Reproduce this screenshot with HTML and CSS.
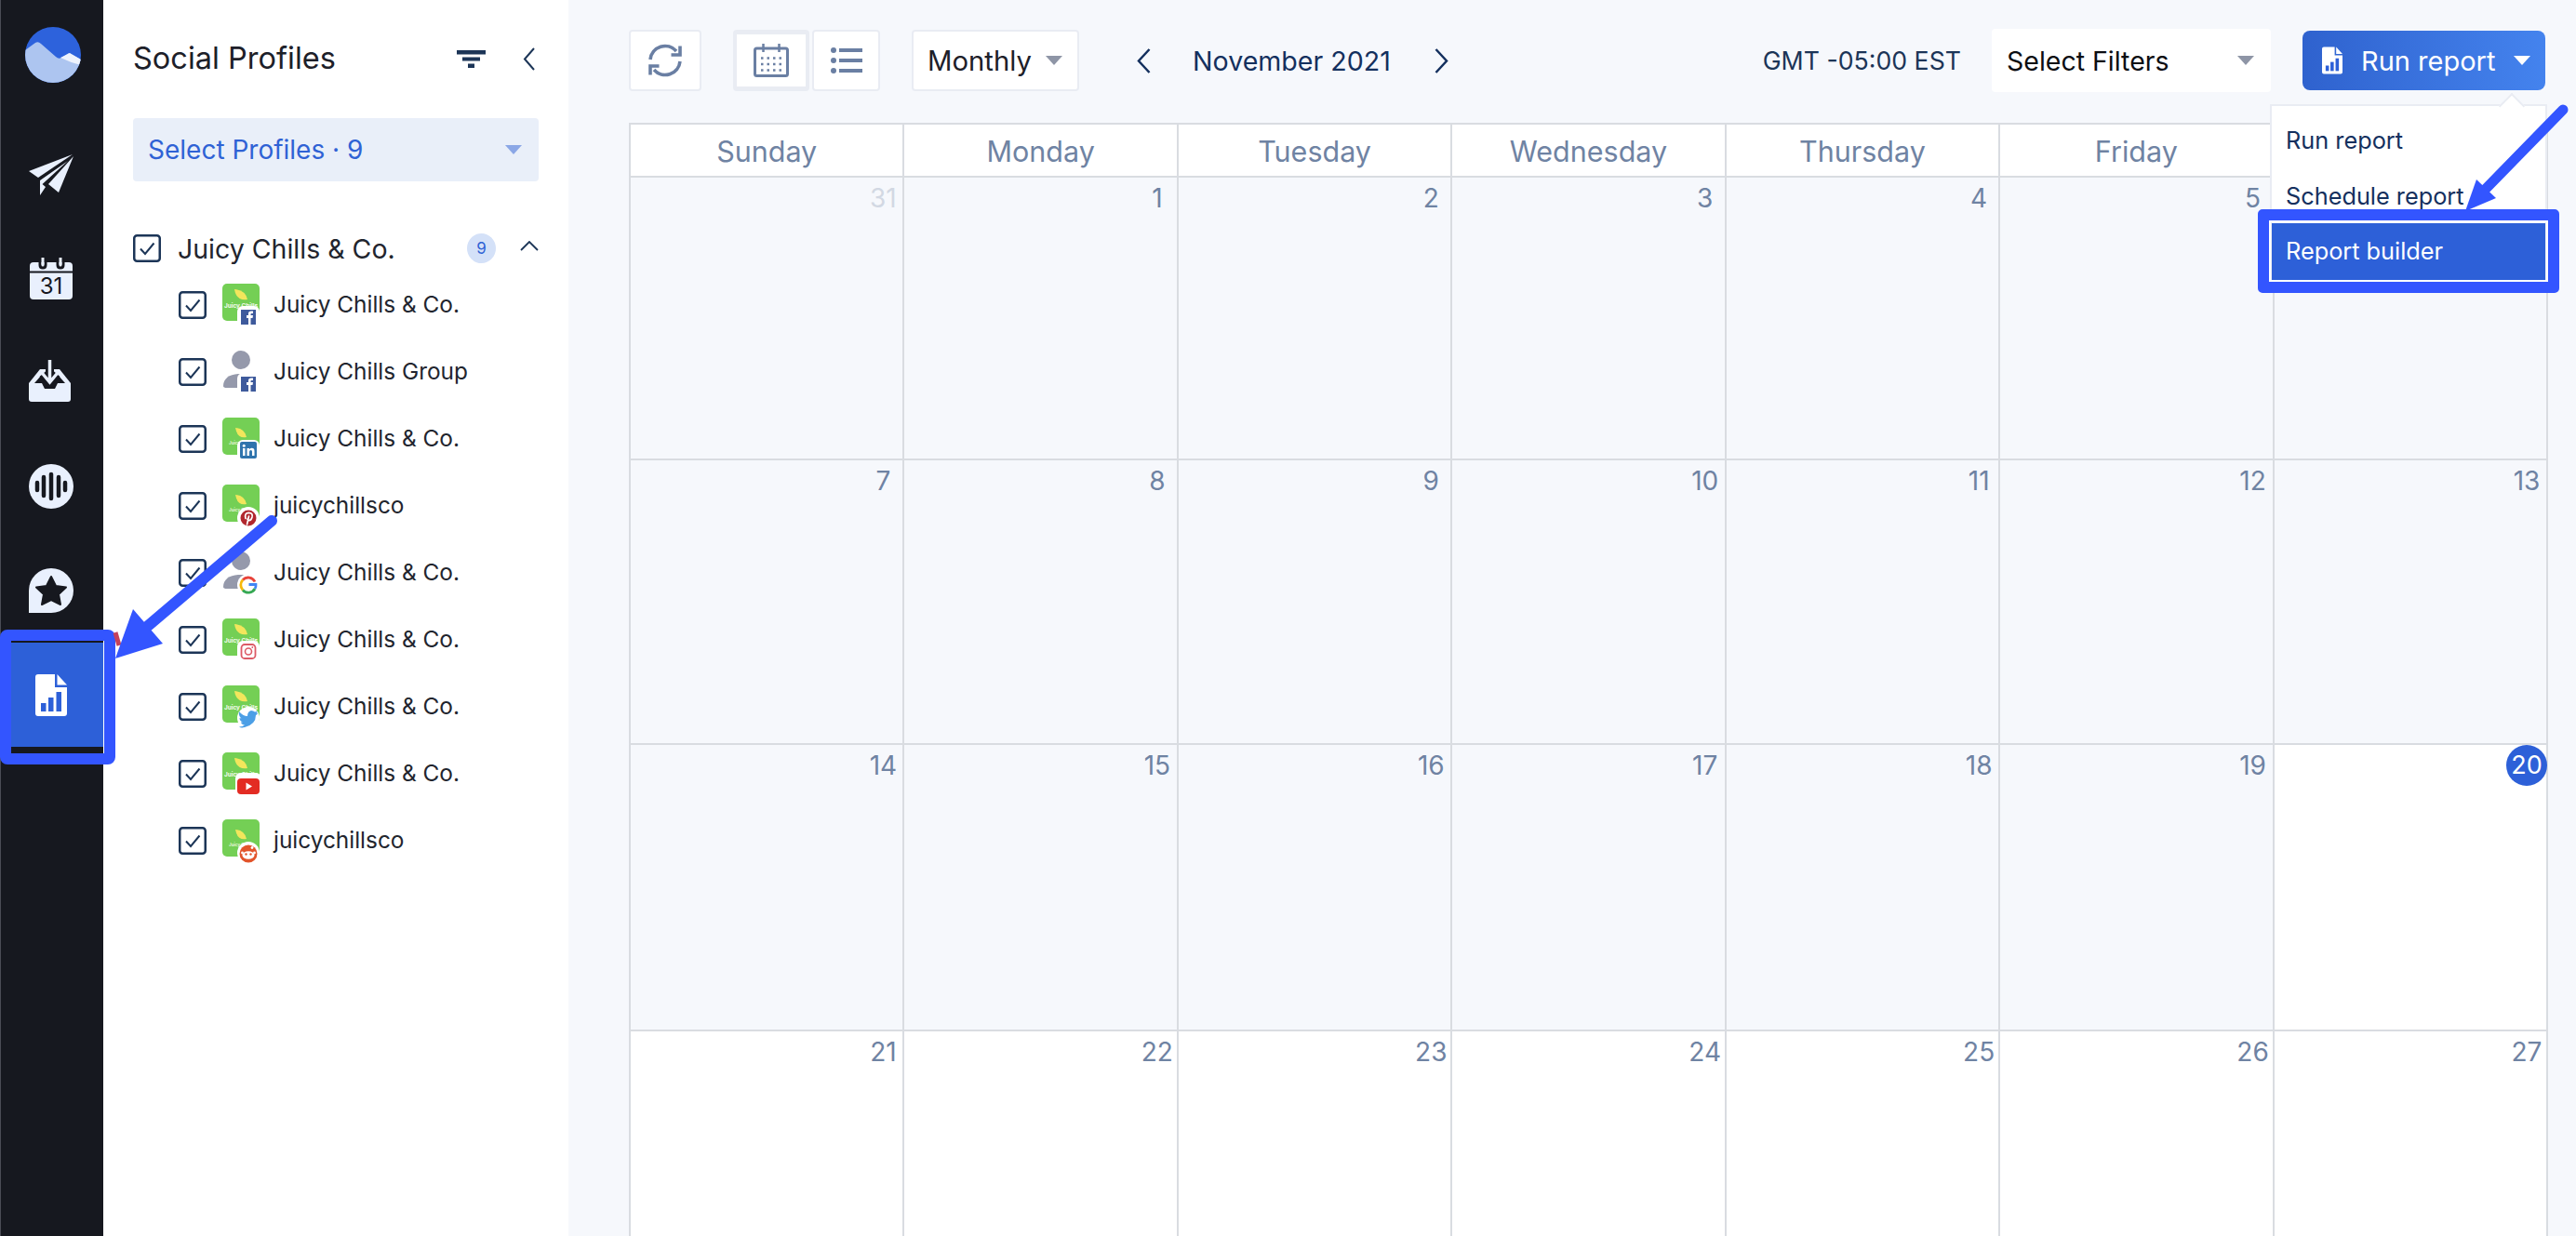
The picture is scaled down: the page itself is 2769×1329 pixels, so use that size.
FILE: index.html
```html
<!DOCTYPE html>
<html lang="en">
<head>
<meta charset="utf-8">
<title>Calendar reports</title>
<link rel="stylesheet" href="styles.css">
</head>
<body>
<svg class="defs" width="0" height="0" aria-hidden="true">
  <defs>
    <symbol id="logo-a" viewBox="0 0 44 48">
      <rect x="0" y="0" width="40" height="40" rx="5" fill="#74cf55"/>
      <path d="M13 6Q25 7 27 17Q15 19 13 6Z" fill="#f2e65c"/>
      <text x="20" y="26" text-anchor="middle" font-size="6.4" font-weight="700" fill="#f4fbef" font-family="Inter, sans-serif">Juicy Chills</text>
    </symbol>
    <symbol id="logo-b" viewBox="0 0 44 48">
      <rect x="0" y="0" width="40" height="40" rx="5" fill="#74cf55"/>
      <path d="M14 11Q24 12 26 21Q16 23 14 11Z" fill="#f2e65c"/>
      <text x="20" y="29" text-anchor="middle" font-size="4.6" font-weight="700" fill="#e3f5d8" font-family="Inter, sans-serif">Juicy Chills</text>
    </symbol>
    <symbol id="person" viewBox="0 0 44 48">
      <circle cx="20" cy="10" r="10" fill="#9599ab"/>
      <path d="M1 38C1 30 8 25 19 25H30V40H5Q1 40 1 38Z" fill="#9599ab"/>
    </symbol>
    <symbol id="b-fb" viewBox="0 0 44 48">
      <rect x="16" y="24" width="24" height="24" rx="6" fill="#fff"/>
      <rect x="20" y="28" width="16" height="16" fill="#3e5a9c"/>
      <path d="M28 44V37H26V34H28V32Q28 29.500 31 29.500H33V32H31.500Q30.500 32 30.500 33V34H33L32.500 37H30.500V44Z" fill="#fff"/>
    </symbol>
    <symbol id="b-in" viewBox="0 0 44 48">
      <rect x="16" y="24" width="24" height="24" rx="6" fill="#fff"/>
      <rect x="19" y="26" width="18" height="18" rx="2" fill="#2f74ad"/>
      <path d="M22 33H24.500V41H22ZM26.500 33H29V34.200Q30 32.800 31.800 32.800Q34.500 32.800 34.500 36V41H32V36.500Q32 35 30.700 35Q29 35 29 36.800V41H26.500Z" fill="#fff"/>
      <circle cx="23.200" cy="30.300" r="1.500" fill="#fff"/>
    </symbol>
    <symbol id="b-pin" viewBox="0 0 44 48">
      <circle cx="28" cy="36" r="12" fill="#fff"/>
      <circle cx="28" cy="36" r="8.500" fill="#b1272e"/>
      <path d="M26.500 43L28.500 34M25 36.500Q23.500 30.500 28.500 30.300Q33 30.500 32 35Q31 39 28 38.500Q27 38.200 27 37.200" fill="none" stroke="#fff" stroke-width="1.700" stroke-linecap="round"/>
    </symbol>
    <symbol id="b-g" viewBox="0 0 44 48">
      <circle cx="28" cy="36" r="12" fill="#fff"/>
      <path d="M35 32.500A8 8 0 0 0 22 30.500" fill="none" stroke="#e8433a" stroke-width="2.800"/>
      <path d="M22 30.500A8 8 0 0 0 22 41.500" fill="none" stroke="#f6b90c" stroke-width="2.800"/>
      <path d="M22 41.500A8 8 0 0 0 35 40" fill="none" stroke="#36a853" stroke-width="2.800"/>
      <path d="M35 40Q36.300 38 36 35.500H28.500" fill="none" stroke="#4285f4" stroke-width="2.800"/>
    </symbol>
    <symbol id="b-ig" viewBox="0 0 44 48">
      <rect x="16" y="24" width="24" height="24" rx="6" fill="#fff"/>
      <rect x="20.500" y="28" width="15" height="15" rx="3.500" fill="none" stroke="#dc5b66" stroke-width="1.800"/>
      <circle cx="28" cy="35.500" r="3.500" fill="none" stroke="#dc5b66" stroke-width="1.600"/>
      <circle cx="32.300" cy="31" r="0.900" fill="#dc5b66"/>
    </symbol>
    <symbol id="b-tw" viewBox="0 0 44 48">
      <circle cx="28" cy="35" r="12" fill="#fff"/>
      <path d="M18 28Q22 33 27 33Q27 28 31 27Q33.500 27 35 28.500L38 27.500L36.500 30L38.500 29.500Q37 31.500 36 32Q36 42 24 45Q20 46 18 44.500Q22 44.500 24 42.500Q20.500 42 20 39.500L22 39.500Q18.500 38 18.500 35L20.500 35.500Q17 33 18 28Z" fill="#4c9fe6"/>
    </symbol>
    <symbol id="b-yt" viewBox="0 0 44 48">
      <rect x="14" y="22" width="28" height="24" rx="6" fill="#fff"/>
      <rect x="16" y="28" width="24" height="17" rx="4" fill="#e32c23"/>
      <path d="M25.500 32.500L32 36.500L25.500 40.500Z" fill="#fff"/>
    </symbol>
    <symbol id="b-rd" viewBox="0 0 44 48">
      <circle cx="28" cy="36" r="12" fill="#fff"/>
      <circle cx="28" cy="37" r="9.500" fill="#e2542a"/>
      <ellipse cx="28" cy="38.500" rx="6.500" ry="4.300" fill="#fff"/>
      <circle cx="25.500" cy="37.500" r="1.200" fill="#e2542a"/>
      <circle cx="30.500" cy="37.500" r="1.200" fill="#e2542a"/>
      <circle cx="32" cy="30.500" r="1.400" fill="#fff"/>
      <circle cx="21.500" cy="36" r="1.400" fill="#fff"/>
      <circle cx="34.500" cy="36" r="1.400" fill="#fff"/>
    </symbol>
    <symbol id="chk" viewBox="0 0 30 30">
      <rect x="1.250" y="1.250" width="27.500" height="27.500" rx="3" fill="#fff" stroke="#1c3557" stroke-width="2.500"/>
      <path d="M8 15.500L13 21L22.500 9.500" fill="none" stroke="#1c3557" stroke-width="2"/>
    </symbol>
    <symbol id="doc" viewBox="0 0 34 45">
      <path d="M3 0H21V14H34V42Q34 45 31 45H3Q0 45 0 42V3Q0 0 3 0Z" fill="#fff"/>
      <path d="M23.500 0L34 11.500H23.500Z" fill="#fff"/>
      <rect x="6" y="31" width="5.500" height="9" fill="#2d60d8"/>
      <rect x="14" y="25" width="5.500" height="15" fill="#2d60d8"/>
      <rect x="22.500" y="19" width="5.500" height="21" fill="#2d60d8"/>
    </symbol>
  </defs>
</svg>

<div class="app">
  <nav class="nav">
    <div class="nav-logo">
      <svg class="logo" viewBox="0 0 60 60">
        <defs><clipPath id="logo-clip"><circle cx="30" cy="30" r="30"/></clipPath></defs>
        <g clip-path="url(#logo-clip)">
          <rect width="60" height="60" fill="#2d62dc"/>
          <path d="M0 25L11 17Q14 15 17 18L33 32Q36 35 39 33L47 28L60 35V60H0Z" fill="#adc5f0"/>
          <path d="M38 33L48 28L60 35V41Q48 38 38 33Z" fill="#eef3fd"/>
        </g>
      </svg>
    </div>
    <a class="nav-item">
      <svg class="ni-plane" viewBox="0 0 48 45" fill="#e9f0fd">
        <path d="M47 1L0 19L10 26Z"/>
        <path d="M48 3L21 33L32 42Z"/>
        <path d="M42 8L12 29V45L18 36L14.500 33Z"/>
      </svg>
    </a>
    <a class="nav-item">
      <svg class="ni-cal" viewBox="0 0 46 45">
        <path d="M4 5H42Q46 5 46 9V41Q46 45 42 45H4Q0 45 0 41V9Q0 5 4 5Z" fill="#e9f0fd"/>
        <path d="M0 15.500H46" stroke="#16181f" stroke-width="2"/>
        <path d="M11 1V8Q11 11 14 11Q17 11 17 8V1" fill="none" stroke="#16181f" stroke-width="3"/>
        <path d="M30 1V8Q30 11 33 11Q36 11 36 8V1" fill="none" stroke="#16181f" stroke-width="3"/>
        <path d="M14 0V7M33 0V7" stroke="#e9f0fd" stroke-width="3" stroke-linecap="round"/>
        <text x="23" y="39" text-anchor="middle" font-size="24" fill="#16181f" font-family="Inter, sans-serif">31</text>
      </svg>
    </a>
    <a class="nav-item">
      <svg class="ni-inbox" viewBox="0 0 45 45">
        <path d="M12 10L0 25V42Q0 45 3 45H42Q45 45 45 42V25L33 10Z" fill="#e9f0fd"/>
        <path d="M13 17L6 25H14L17 31H28L31 25H39L32 17Z" fill="#16181f"/>
        <path d="M22.500 0V20M15 15L22.500 24L30 15" fill="none" stroke="#16181f" stroke-width="9"/>
        <path d="M22.500 0V22M15 15L22.500 24L30 15" fill="none" stroke="#e9f0fd" stroke-width="3.500" stroke-linecap="round"/>
      </svg>
    </a>
    <a class="nav-item">
      <svg class="ni-pod" viewBox="0 0 48 48">
        <circle cx="24" cy="24" r="24" fill="#e9f0fd"/>
        <path d="M9 20V28M16 14V34M24 11V37M32 14V34M39 20V28" stroke="#16181f" stroke-width="4.500" stroke-linecap="round"/>
      </svg>
    </a>
    <a class="nav-item">
      <svg class="ni-star" viewBox="0 0 48 48">
        <path d="M24 0A24 24 0 0 1 24 48H0V24A24 24 0 0 1 24 0Z" fill="#e9f0fd"/>
        <path d="M24 9L29 19L40 20.500L32 28L34 39L24 34L14 39L16 28L8 20.500L19 19Z" fill="#16181f" stroke="#16181f" stroke-width="2" stroke-linejoin="round"/>
      </svg>
    </a>
    <a class="nav-item nav-active">
      <svg class="ni-doc"><use href="#doc"/></svg>
    </a>
  </nav>

  <aside class="panel">
    <div class="panel-head">
      <h2 class="panel-title">Social Profiles</h2>
      <svg class="ic-filter" viewBox="0 0 31 19" fill="#1c3557">
        <rect width="31" height="4.500"/><rect x="6" y="7.500" width="19" height="4"/><rect x="12" y="14.500" width="7" height="4.500"/>
      </svg>
      <svg class="ic-back" viewBox="0 0 13 25"><path d="M12 1L2 12.500L12 24" fill="none" stroke="#1c3557" stroke-width="2"/></svg>
    </div>
    <div class="profile-select">
      <span>Select Profiles · 9</span>
      <i class="tri tri-blue"></i>
    </div>
    <div class="group">
      <svg class="chk"><use href="#chk"/></svg>
      <span class="group-name">Juicy Chills &amp; Co.</span>
      <span class="count">9</span>
      <svg class="ic-up" viewBox="0 0 20 11"><path d="M1 10L10 1L19 10" fill="none" stroke="#1c3557" stroke-width="1.800"/></svg>
    </div>
    <ul class="profiles">
      <li class="profile"><svg class="chk"><use href="#chk"/></svg><svg class="avatar"><use href="#logo-a"/><use href="#b-fb"/></svg><span>Juicy Chills &amp; Co.</span></li>
      <li class="profile"><svg class="chk"><use href="#chk"/></svg><svg class="avatar"><use href="#person"/><use href="#b-fb"/></svg><span>Juicy Chills Group</span></li>
      <li class="profile"><svg class="chk"><use href="#chk"/></svg><svg class="avatar"><use href="#logo-b"/><use href="#b-in"/></svg><span>Juicy Chills &amp; Co.</span></li>
      <li class="profile"><svg class="chk"><use href="#chk"/></svg><svg class="avatar"><use href="#logo-b"/><use href="#b-pin"/></svg><span>juicychillsco</span></li>
      <li class="profile"><svg class="chk"><use href="#chk"/></svg><svg class="avatar"><use href="#person"/><use href="#b-g"/></svg><span>Juicy Chills &amp; Co.</span></li>
      <li class="profile"><svg class="chk"><use href="#chk"/></svg><svg class="avatar"><use href="#logo-a"/><use href="#b-ig"/></svg><span>Juicy Chills &amp; Co.</span></li>
      <li class="profile"><svg class="chk"><use href="#chk"/></svg><svg class="avatar"><use href="#logo-a"/><use href="#b-tw"/></svg><span>Juicy Chills &amp; Co.</span></li>
      <li class="profile"><svg class="chk"><use href="#chk"/></svg><svg class="avatar"><use href="#logo-a"/><use href="#b-yt"/></svg><span>Juicy Chills &amp; Co.</span></li>
      <li class="profile"><svg class="chk"><use href="#chk"/></svg><svg class="avatar"><use href="#logo-b"/><use href="#b-rd"/></svg><span>juicychillsco</span></li>
    </ul>
  </aside>

  <main class="main">
    <div class="toolbar">
      <button class="tbtn tbtn-refresh">
        <svg class="ic-sync" viewBox="0 0 38 36" fill="none" stroke="#6a7fa3" stroke-width="3.600">
          <path d="M3 17A16 16 0 0 1 31 8"/><path d="M35 2.500V12H25.500"/>
          <path d="M35 19A16 16 0 0 1 7 28"/><path d="M3 33.500V24H12.500"/>
        </svg>
      </button>
      <div class="view-toggle">
        <button class="tbtn tbtn-cal">
          <svg class="ic-grid" viewBox="0 0 38 36" fill="none" stroke="#6a7fa3">
            <rect x="1.500" y="5" width="35" height="29.500" rx="2" stroke-width="3"/>
            <path d="M10.500 0V9M27.500 0V9" stroke-width="2.500"/>
            <path d="M8 15.500H31M8 22H31M8 28.500H31" stroke-width="2.500" stroke-dasharray="2.500 4"/>
          </svg>
        </button>
        <button class="tbtn tbtn-list">
          <svg class="ic-list" viewBox="0 0 34 28" fill="#6a7fa3">
            <circle cx="3" cy="3" r="3"/><circle cx="3" cy="14" r="3"/><circle cx="3" cy="25" r="3"/>
            <rect x="9" y="1" width="25" height="4"/><rect x="9" y="12" width="25" height="4"/><rect x="9" y="23" width="25" height="4"/>
          </svg>
        </button>
      </div>
      <button class="tbtn tbtn-period"><span>Monthly</span><i class="tri tri-gray"></i></button>
      <svg class="ic-prev" viewBox="0 0 15 27"><path d="M13.500 1L2 13.500L13.500 26" fill="none" stroke="#14305e" stroke-width="2.500"/></svg>
      <span class="month">November 2021</span>
      <svg class="ic-next" viewBox="0 0 15 27"><path d="M1.500 1L13 13.500L1.500 26" fill="none" stroke="#14305e" stroke-width="2.500"/></svg>
      <span class="tz">GMT -05:00 EST</span>
      <div class="filter-select"><span>Select Filters</span><i class="tri tri-gray"></i></div>
      <div class="run-wrap">
        <button class="run-btn">
          <svg class="ic-rundoc"><use href="#doc"/></svg>
          <span>Run report</span>
          <i class="tri tri-white"></i>
        </button>
        <div class="menu">
          <a class="menu-item">Run report</a>
          <a class="menu-item">Schedule report</a>
          <a class="menu-item menu-active">Report builder</a>
        </div>
      </div>
    </div>

    <div class="cal">
      <div class="dow">Sunday</div><div class="dow">Monday</div><div class="dow">Tuesday</div><div class="dow">Wednesday</div><div class="dow">Thursday</div><div class="dow">Friday</div><div class="dow">Saturday</div>
      <div class="day"><span class="num num-off">31</span></div><div class="day"><span class="num">1</span></div><div class="day"><span class="num">2</span></div><div class="day"><span class="num">3</span></div><div class="day"><span class="num">4</span></div><div class="day"><span class="num">5</span></div><div class="day"><span class="num">6</span></div>
      <div class="day"><span class="num">7</span></div><div class="day"><span class="num">8</span></div><div class="day"><span class="num">9</span></div><div class="day"><span class="num">10</span></div><div class="day"><span class="num">11</span></div><div class="day"><span class="num">12</span></div><div class="day"><span class="num">13</span></div>
      <div class="day"><span class="num">14</span></div><div class="day"><span class="num">15</span></div><div class="day"><span class="num">16</span></div><div class="day"><span class="num">17</span></div><div class="day"><span class="num">18</span></div><div class="day"><span class="num">19</span></div><div class="day day-future"><span class="num num-today">20</span></div>
      <div class="day day-future"><span class="num">21</span></div><div class="day day-future"><span class="num">22</span></div><div class="day day-future"><span class="num">23</span></div><div class="day day-future"><span class="num">24</span></div><div class="day day-future"><span class="num">25</span></div><div class="day day-future"><span class="num">26</span></div><div class="day day-future"><span class="num">27</span></div>
    </div>
  </main>

  <div class="mark mark-nav"></div>
  <div class="mark mark-menu"></div>
  <svg class="arrows" viewBox="0 0 2769 1329" aria-hidden="true">
    <path d="M247 596L186 650" stroke="#c4415c" stroke-width="3" fill="none"/>
    <path d="M124 680L128 694" stroke="#c4415c" stroke-width="5" fill="none"/>
    <path d="M292 560L159 673" stroke="#3355ff" stroke-width="12" stroke-linecap="round" fill="none"/>
    <path d="M143 655L175 692L124 708Z" fill="#3355ff"/>
    <path d="M2755 118L2672 203" stroke="#3355ff" stroke-width="11" stroke-linecap="round" fill="none"/>
    <path d="M2662 193L2683 213L2650 227Z" fill="#3355ff"/>
  </svg>
</div>
</body>
</html>
```

FILE: styles.css
```css
* { box-sizing: border-box; }
html, body { margin: 0; padding: 0; height: 100%; overflow: hidden; }
body { font-family: Inter, "Liberation Sans", sans-serif; color: #22252e; }
ul { list-style: none; margin: 0; padding: 0; }
button { font: inherit; margin: 0; cursor: pointer; }
.defs { position: absolute; }

.app { position: relative; display: flex; width: 100%; height: 100vh; overflow: hidden; background: #fff; }

/* left rail */
.nav { flex: 0 0 111px; background: #16181f; border-left: 1px solid #4a4c55; display: flex; flex-direction: column; }
.nav-logo { height: 131px; padding: 29px 0 0 26px; }
.logo { display: block; width: 60px; height: 60px; }
.nav-item { flex: 0 0 112px; display: flex; align-items: center; padding-left: 30px; }
.nav-active { background: #2d60d8; margin-left: -1px; padding-left: 38px; }
.ni-plane { width: 48px; height: 45px; }
.ni-cal { width: 46px; height: 45px; margin-left: 1px; }
.ni-inbox { width: 45px; height: 45px; margin-top: -3px; }
.ni-pod, .ni-star { width: 48px; height: 48px; }
.ni-doc { width: 34px; height: 45px; }

/* profiles panel */
.panel { flex: 0 0 500px; padding: 0 32px; background: #fff; }
.panel-head { height: 127px; display: flex; align-items: center; padding-bottom: 3px; }
.panel-title { flex: 1; margin: 0; font-size: 32.500px; font-weight: 400; color: #1d2029; white-space: nowrap; }
.ic-filter { width: 31px; height: 19px; margin-top: 3px; }
.ic-back { width: 13px; height: 25px; margin: 3px 4px 0 40px; }
.profile-select { height: 68px; background: #e9eff9; border-radius: 4px; padding: 0 18px 0 16px; display: flex; align-items: center; justify-content: space-between; color: #2f62d5; font-size: 28px; }
.tri { display: block; width: 0; height: 0; border-style: solid; border-color: transparent; border-width: 10px 9px 0; }
.tri-blue { border-top-color: #8ba7e6; }
.tri-gray { border-top-color: #8e95a6; }
.tri-white { border-top-color: #fff; }

.group { display: flex; align-items: center; height: 32px; margin-top: 56px; }
.chk { flex: none; width: 30px; height: 30px; }
.group-name { flex: 1; margin-left: 18px; font-size: 28.500px; white-space: nowrap; }
.count { width: 31px; height: 32px; border-radius: 50%; background: #d4e1f8; color: #2f62d5; font-size: 17px; display: flex; align-items: center; justify-content: center; }
.ic-up { width: 20px; height: 11px; margin: -6px 0 0 26px; }

.profiles { margin: 9px 0 0 49px; }
.profile { height: 72px; display: flex; align-items: center; }
.avatar { flex: none; width: 44px; height: 48px; margin: 2px 11px 0 17px; }
.profile span { font-size: 24.400px; white-space: nowrap; margin-top: -3px; }

/* main */
.main { flex: 1; min-width: 0; background: #f6f8fc; padding: 32px 30px 0 65px; }
.toolbar { display: flex; align-items: center; height: 66px; margin-bottom: 34px; padding-right: 3px; }
.tbtn { display: flex; align-items: center; justify-content: center; height: 66px; background: #fff; border: 2px solid #e9ecf3; border-radius: 4px; padding: 0; color: #1d2029; }
.tbtn-refresh { width: 78px; }
.ic-sync { width: 38px; height: 36px; }
.view-toggle { display: flex; gap: 3px; margin-left: 34px; }
.tbtn-cal { width: 82px; border: 4px solid #e9ecf3; border-width: 5px 4px; }
.ic-grid { width: 38px; height: 36px; }
.tbtn-list { width: 73px; }
.ic-list { width: 34px; height: 28px; }
.tbtn-period { width: 180px; margin-left: 34px; font-size: 29.300px; padding: 0 16px 0 15px; justify-content: space-between; }
.ic-prev { width: 15px; height: 27px; margin-left: 62px; }
.month { margin-left: 45px; font-size: 28.600px; color: #14305e; white-space: nowrap; }
.ic-next { width: 15px; height: 27px; margin-left: 47px; }
.tz { margin-left: auto; font-size: 26.700px; color: #1c3557; white-space: nowrap; }
.filter-select { width: 300px; height: 68px; margin-left: 33px; background: #fff; border-radius: 4px; display: flex; align-items: center; justify-content: space-between; padding: 0 18px 0 16px; font-size: 28.500px; color: #0c0e13; }
.run-wrap { position: relative; margin-left: 34px; }
.run-btn { display: flex; align-items: center; width: 261px; height: 64px; border: 0; border-radius: 8px; padding: 0 16px 0 21px; background: linear-gradient(90deg, #2f62ce, #4483ee); color: #fff; font-size: 29px; }
.ic-rundoc { width: 22px; height: 30px; }
.run-btn span { flex: 1; text-align: left; margin-left: 20px; white-space: nowrap; }

/* dropdown */
.menu { position: absolute; z-index: 3; top: 79px; right: -2px; width: 298px; background: #fff; border: 2px solid #e9ecf3; padding: 6px 0 0; }
.menu::before { content: ""; position: absolute; top: -10px; right: 26px; width: 18px; height: 18px; background: #fff; border-top: 2px solid #e9ecf3; border-left: 2px solid #e9ecf3; transform: rotate(45deg); }
.menu-item { display: flex; align-items: center; height: 60px; padding-left: 15px; font-size: 25.300px; color: #14305e; white-space: nowrap; }
.menu-active { background: #2d60d8; color: #fff; height: 64px; padding-bottom: 5px; }

/* calendar */
.cal { display: grid; grid-template-columns: repeat(7, 1fr); grid-template-rows: 57px 304px 306px 308px 308px; border-top: 2px solid #d9dce1; border-left: 2px solid #d9dce1; }
.dow { background: #fff; border-right: 2px solid #d9dce1; border-bottom: 2px solid #d9dce1; display: flex; align-items: center; justify-content: center; font-size: 30.500px; color: #6f83a3; padding-top: 2px; white-space: nowrap; }
.day { border-right: 2px solid #d9dce1; border-bottom: 2px solid #d9dce1; }
.day-future { background: #fff; }
.num { display: block; width: 44px; height: 44px; margin: 0 -1px 0 auto; line-height: 44px; text-align: center; font-size: 28px; color: #6f83a3; }
.num-off { color: #d2d8e3; }
.num-today { background: #2d60d8; color: #fff; border-radius: 50%; font-size: 27px; }

/* tutorial annotations lying over the interface */
.mark { position: absolute; z-index: 4; border: 12px solid #3355ff; }
.mark-nav { left: 0; top: 677px; width: 124px; height: 145px; border-radius: 8px; }
.mark-menu { left: 2427px; top: 225px; width: 324px; height: 90px; border-radius: 5px; box-shadow: inset 0 0 0 2px #fff; }
.arrows { position: absolute; z-index: 5; left: 0; top: 0; width: 2769px; height: 1329px; pointer-events: none; }
```
